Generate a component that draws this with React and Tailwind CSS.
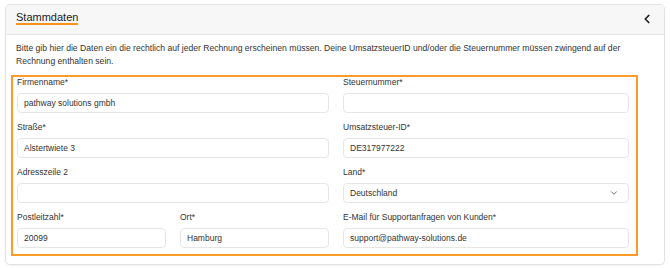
import { ChevronLeft, ChevronDown } from "lucide-react";

const font = { fontFamily: '"Liberation Sans", Arial, sans-serif' };

function Field({ label, value, select }) {
  return (
    <div className="flex flex-col">
      <label className="text-[8.5px] leading-[10px] text-[#333] mb-[6px]">{label}</label>
      <div className="h-[20px] rounded-[4px] border border-[#e6e6e6] bg-white px-[6px] flex items-center justify-between text-[8.5px] text-[#333]">
        <span>{value}</span>
        {select && <ChevronDown size={10} strokeWidth={2} className="text-[#555] mr-[3px]" />}
      </div>
    </div>
  );
}

export default function App() {
  return (
    <div className="w-[670px] h-[268px] bg-white pt-[4px] pl-[5px]" style={font}>
      <div className="w-[660px] h-[261px] rounded-[5px] border border-[#e3e3e3] shadow-[0_1px_2px_rgba(0,0,0,0.06)] overflow-hidden">
        <div className="h-[30px] bg-[#f7f7f7] border-b border-[#e6e6e6] flex items-start justify-between pl-[10px] pr-[10px] pt-[6px]">
          <span className="text-[11px] text-[#222] leading-[12px] border-b-2 border-[#f7931e]">
            Stammdaten
          </span>
          <ChevronLeft size={14} strokeWidth={3} className="text-[#222] mt-[1px]" />
        </div>
        <div className="pt-[7px] pl-[10px] pr-[8px]">
          <p className="text-[8.6px] leading-[13px] text-[#333] pr-[6px]">
            Bitte gib hier die Daten ein die rechtlich auf jeder Rechnung erscheinen müssen. Deine UmsatzsteuerID und/oder die Steuernummer müssen zwingend auf der Rechnung enthalten sein.
          </p>
          <div className="mt-[7px] -ml-[5px] w-[627px] h-[181px] border-2 border-[#fb9b28] pl-[4px]">
            <div className="grid grid-cols-[312px_286px] gap-x-[14px] gap-y-[9px]">
              <Field label="Firmenname*" value="pathway solutions gmbh" />
              <Field label="Steuernummer*" value="" />
              <Field label="Straße*" value="Alstertwiete 3" />
              <Field label="Umsatzsteuer-ID*" value="DE317977222" />
              <Field label="Adresszeile 2" value="" />
              <Field label="Land*" value="Deutschland" select />
              <div className="grid grid-cols-2 gap-x-[14px]">
                <Field label="Postleitzahl*" value="20099" />
                <Field label="Ort*" value="Hamburg" />
              </div>
              <Field label="E-Mail für Supportanfragen von Kunden*" value="support@pathway-solutions.de" />
            </div>
          </div>
        </div>
      </div>
    </div>
  );
}
